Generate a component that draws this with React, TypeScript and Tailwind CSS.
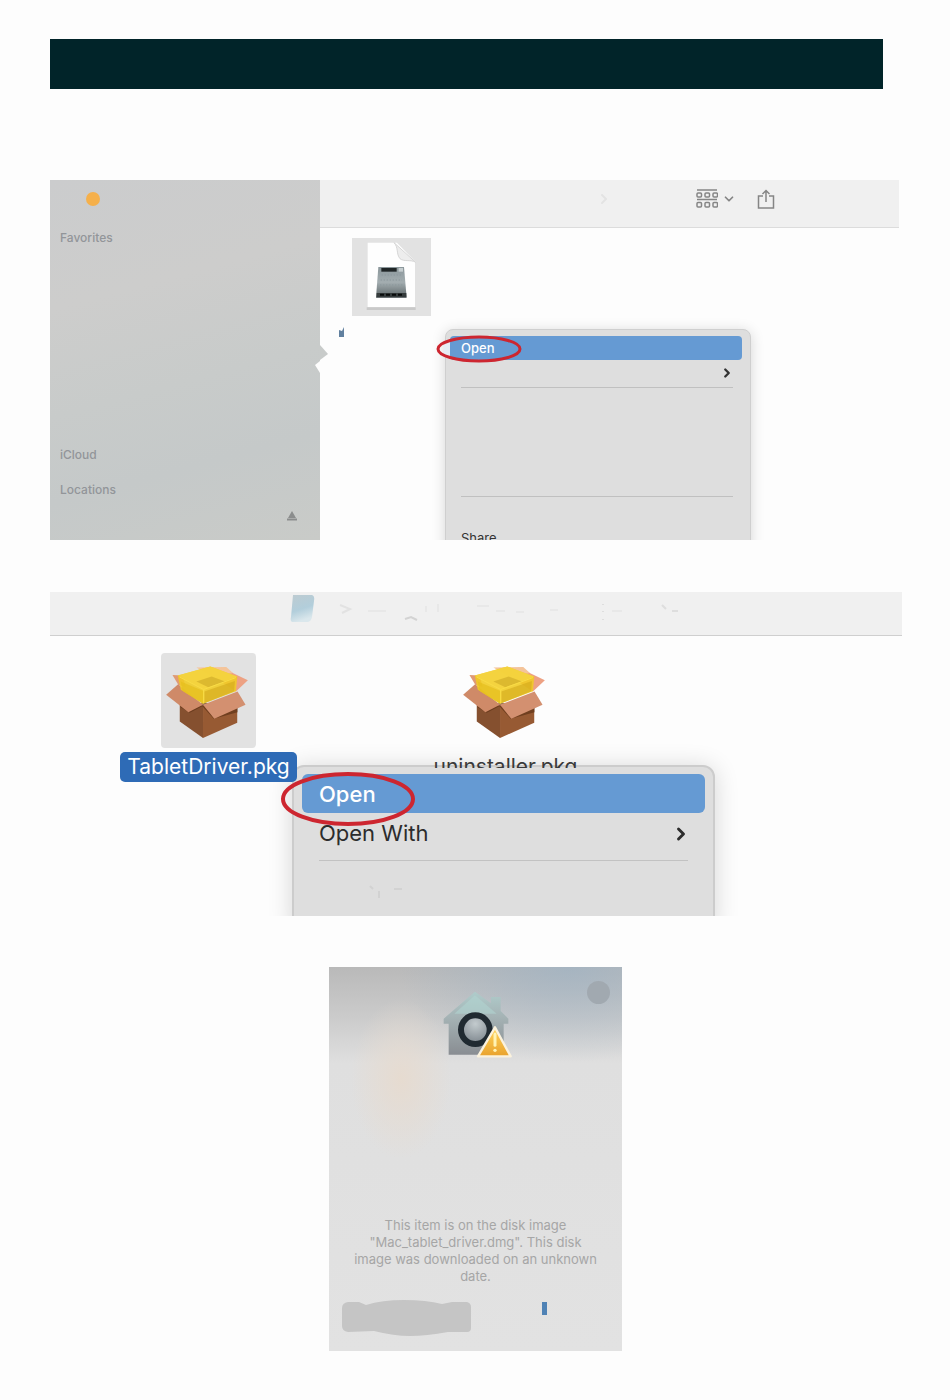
import React from "react";
import { ChevronDown, ChevronRight } from "lucide-react";

function DiskImageIcon() {
  return (
    <svg viewBox="96 204 237 234" className="block h-[78px] w-[79px]" aria-hidden="true">
      <defs>
        <linearGradient id="disk" x1="0" y1="0" x2="0" y2="1">
          <stop offset="0" stopColor="#8b979b" />
          <stop offset="0.5" stopColor="#a3adb0" />
          <stop offset="1" stopColor="#5b6466" />
        </linearGradient>
      </defs>
      <path d="M140 412h147v8H140z" fill="#c9c9c9" />
      <path d="M143 218h88l54 56v137H143z" fill="#fefefe" />
      <path d="M222 218c14 14 6 34 18 48 12 10 30 2 46 10z" fill="#ededed" stroke="#d6d6d6" strokeWidth="3" />
      <path d="M175 291h77l8 92h-92z" fill="url(#disk)" />
      <path d="M184 294h46v11h-46z" fill="#202627" />
      <path d="M236 294h13v11h-13z" fill="#c5cdcf" />
      <path d="M170 369h89v13h-89z" fill="#353b3c" />
      <path d="M180 374h70" stroke="#080b0b" strokeWidth="6" strokeDasharray="12 6" />
      <path d="M185 315h58M182 330h64M180 345h68" stroke="#8b979b" strokeWidth="3" strokeDasharray="4 5" />
    </svg>
  );
}

function PackageIcon() {
  return (
    <svg viewBox="364 202 285 286" className="block size-[95px]" aria-hidden="true">
      <path d="M420 350l70 10v98l-70-50z" fill="#85502f" />
      <path d="M490 360l103-30v82l-103 46z" fill="#975a33" />
      <path d="M420 364l30 18 38-20 34 38 72-20v-20l-100-8z" fill="#5f3317" opacity="0.7" />
      <path d="M398 268l30 2 10 34-22-6z" fill="#e09a74" />
      <path d="M545 246l80 38-36 34-60-40z" fill="#eda183" />
      <path d="M470 246l90-2 20 18-60 12z" fill="#f4c49a" />
      <path d="M415 296l-36 32 67 52 44-22z" fill="#cf8a68" />
      <path d="M490 358l104-40 24 40-94 42z" fill="#d39070" />
      <path d="M414 270l98-27 81 30-4 44-99 38-67-42z" fill="#f0cb22" opacity="0.88" />
      <path d="M414 270l98-27 81 30-101 38z" fill="#f5d440" opacity="0.85" />
      <path d="M423 288l67 28v39l-62-39z" fill="#e6bf1c" opacity="0.7" />
      <path d="M494 318l92-32-2 31-90 36z" fill="#d2a81a" opacity="0.6" />
      <path d="M470 288l46-15 40 15-50 17z" fill="#d2ae2a" opacity="0.7" />
      <path d="M419 274l73 38 97-36M492 312v42" fill="none" stroke="#f9dc45" strokeWidth="3" />
    </svg>
  );
}

function GatekeeperIcon() {
  return (
    <svg viewBox="370 90 210 210" className="block size-[70px]" aria-hidden="true">
      <defs>
        <linearGradient id="house" x1="0" y1="0" x2="0" y2="1">
          <stop offset="0" stopColor="#afcccb" />
          <stop offset="0.4" stopColor="#a5b3b5" />
          <stop offset="1" stopColor="#898d92" />
        </linearGradient>
        <radialGradient id="lens" cx="0.5" cy="0.3" r="0.7">
          <stop offset="0" stopColor="#c3cbce" />
          <stop offset="1" stopColor="#7d868d" />
        </radialGradient>
        <linearGradient id="alert" x1="0" y1="0" x2="0" y2="1">
          <stop offset="0" stopColor="#ffd55c" />
          <stop offset="1" stopColor="#e9a22d" />
        </linearGradient>
      </defs>
      <path d="M466 95l48 35v-19h29v42l23 23v15h-14v93H387v-93h-15v-15z" fill="url(#house)" />
      <path d="M466 106l65 55H404z" fill="#b1d4d1" opacity="0.6" />
      <circle cx="467" cy="209" r="43" fill="url(#lens)" stroke="#202a31" strokeWidth="18" />
      <path d="M526 202l47 87h-98z" fill="url(#alert)" stroke="#fbf2dd" strokeWidth="7" strokeLinejoin="round" />
      <path d="M526 222v34" stroke="#fff3b4" strokeWidth="9" strokeLinecap="round" />
      <circle cx="526" cy="271" r="5" fill="#fff3b4" />
    </svg>
  );
}

function GridIcon() {
  const columns = [0, 8, 16];
  return (
    <svg viewBox="0 0 22 20" className="h-5 w-[22px]" fill="none" stroke="#858585" strokeWidth="1.5" aria-hidden="true">
      <path d="M1 1h20M1 10.5h20" />
      {columns.map((x) => (
        <g key={x}>
          <rect x={x + 1} y="4" width="4.5" height="4" rx="1" />
          <rect x={x + 1} y="13.5" width="4.5" height="4.5" rx="1" />
        </g>
      ))}
    </svg>
  );
}

function ShareIcon() {
  return (
    <svg viewBox="0 0 18 21" className="h-[21px] w-[18px]" fill="none" stroke="#858585" strokeWidth="1.5" aria-hidden="true">
      <path d="M6 7H1.5v12h15V7H12M9 13V1.5M5.5 5L9 1.5 12.5 5" />
    </svg>
  );
}

function Finder() {
  return (
    <section className="relative mr-[3px] flex h-[360px] overflow-hidden">
      <aside className="flex w-[270px] shrink-0 flex-col bg-[linear-gradient(165deg,#cbcccd_0%,#cdcdcc_30%,#c8cbca_55%,#c5c9c9_75%,#c9cbc8_100%)] px-[10px] pt-3 text-[12px] leading-4 font-medium text-[#929599]">
        <span className="ml-[26px] size-[14px] rounded-full bg-[#f5b04b]" />
        <h2 className="mt-6">Favorites</h2>
        <h2 className="mt-[201px]">iCloud</h2>
        <h2 className="mt-[19px]">Locations</h2>
        <button aria-label="Eject" className="mt-[13px] mr-3 self-end">
          <svg viewBox="0 0 12 11" className="h-[11px] w-3" fill="#8b8d8d" aria-hidden="true">
            <path d="M6 0l4 7H2zM1 7.500h10v2H1z" />
          </svg>
        </button>
      </aside>
      <div className="min-w-0 flex-1">
        <div className="flex h-12 justify-end border-b border-[#dcdcdc] bg-[#f0f0f0] pr-[124px]">
          <div className="flex h-[38px] items-center">
            <ChevronRight className="mr-[84px] size-4 text-[#e3e3e3]" strokeWidth={3} aria-hidden="true" />
            <button aria-label="View" className="flex items-center gap-1">
              <GridIcon />
              <ChevronDown className="size-[14px] text-[#858585]" strokeWidth={3} />
            </button>
            <button aria-label="Share" className="ml-[21px]">
              <ShareIcon />
            </button>
          </div>
        </div>
        <div className="px-8 pt-[10px]">
          <div className="w-[79px] bg-[#e2e2e2]">
            <DiskImageIcon />
          </div>
        </div>
      </div>

      <svg viewBox="0 0 14 34" className="absolute top-[162px] left-[265px] h-[34px] w-[14px]" aria-hidden="true">
        <path d="M5 3l8 9-8 6z" fill="#c8cbca" />
        <path d="M5 19l-5 4 5 8z" fill="#fdfdfd" />
      </svg>
      <svg viewBox="0 0 6 10" className="absolute top-[147px] left-[289px] h-[10px] w-[6px]" aria-hidden="true">
        <path d="M0 3l3 1 2-4v10H0z" fill="#61809f" />
      </svg>

      <div className="absolute top-[149px] left-[395px] h-[230px] w-[306px] rounded-lg border border-[#cfcfcf] bg-[#dedede] px-1 pt-[6px] text-[13px] leading-6 text-[#333] shadow-[0_2px_14px_rgba(0,0,0,0.16)]">
        <button className="block h-6 w-[292px] rounded bg-[#659ad3] px-[11px] text-left font-medium text-white">Open</button>
        <div className="flex h-[27px] items-center justify-end pr-3 pb-[2px]">
          <ChevronRight className="size-[14px]" strokeWidth={4} aria-hidden="true" />
        </div>
        <hr className="mr-[13px] ml-[11px] border-[#c0c0c0]" />
        <hr className="mt-[108px] mr-[13px] ml-[11px] border-[#c0c0c0]" />
        <button className="mt-[29px] ml-[11px] block">Share</button>
      </div>
      <svg viewBox="0 0 86 28" className="absolute top-[155px] left-[386px] h-7 w-[86px]" aria-hidden="true">
        <path d="M8 8l6-2v16l-6-3z" fill="#e6edf4" />
        <ellipse cx="43" cy="14" rx="41" ry="12" fill="none" stroke="#cd2630" strokeWidth="3" />
      </svg>
    </section>
  );
}

function InstallerWindow() {
  return (
    <section className="relative mt-[52px] h-[324px] overflow-hidden">
      <div className="h-11 border-b border-[#cfcfcf] bg-[#f0f0f0] pl-60">
        <svg viewBox="0 0 400 34" className="h-[34px] w-[400px]" fill="none" aria-hidden="true">
          <defs>
            <linearGradient id="volume" x1="0" y1="0" x2="0.3" y2="1">
              <stop offset="0" stopColor="#bdcbd1" />
              <stop offset="0.6" stopColor="#b2cedb" />
              <stop offset="1" stopColor="#dae7ec" />
            </linearGradient>
          </defs>
          <path d="M3 3h19q3 1 2 6l-2 16q-1 5-5 5H2q-2-1-1-5z" fill="url(#volume)" />
          <path d="M50 13l10 4-8 4" stroke="#e2e2e2" strokeWidth="2" />
          <path d="M78 19h18M136 20v-6M148 20v-8M187 14h12M206 19h9M226 20h8M260 18h8M322 19h10" stroke="#e8e8e8" strokeWidth="2" />
          <path d="M115 27l6-2 6 3" stroke="#d3d3d3" strokeWidth="2" />
          <path d="M313 12v1M313 19v1M313 27v1M372 13l4 4M382 19h6" stroke="#dedede" strokeWidth="2" />
        </svg>
      </div>
      <div className="flex gap-[122px] pt-[17px] pl-[71px] text-[21px] leading-[30px]">
        <div className="flex w-[175px] flex-col items-center gap-1">
          <div className="rounded bg-[#e2e2e2]">
            <PackageIcon />
          </div>
          <div className="relative z-20 rounded-[5px] bg-[#2e6bb6] px-[7px] whitespace-nowrap text-white">TabletDriver.pkg</div>
        </div>
        <div className="relative z-10 flex w-[175px] flex-col items-center gap-1">
          <PackageIcon />
          <div className="h-4 overflow-hidden whitespace-nowrap text-[#3a3a3a]">uninstaller.pkg</div>
        </div>
      </div>

      <div className="absolute top-[173px] left-[242px] h-[170px] w-[423px] rounded-xl border-2 border-[#cccccc] bg-[#dedede] px-2 pt-[7px] text-[22px] text-[#2c2c2c] shadow-[0_2px_24px_rgba(0,0,0,0.16)]">
        <button className="block h-[39px] w-full rounded-md bg-[#659ad3] px-[17px] pt-[2px] text-left font-medium text-white">Open</button>
        <button className="flex h-[39px] w-full items-center justify-between pt-[2px] pr-[14px] pl-[17px] text-left">
          Open With
          <ChevronRight className="size-5" strokeWidth={3.5} aria-hidden="true" />
        </button>
        <hr className="mx-[17px] mt-2 border-[#c2c2c2]" />
        <svg viewBox="0 0 60 26" className="mt-4 ml-12 h-[26px] w-[60px]" fill="none" stroke="#d2d2d2" strokeWidth="2" aria-hidden="true">
          <path d="M20 9l3 3M29 14v7M44 12h8" />
        </svg>
      </div>
      <svg viewBox="0 0 136 56" className="absolute top-[179px] left-[230px] z-20 h-14 w-[136px]" aria-hidden="true">
        <ellipse cx="68" cy="28" rx="65" ry="25" fill="none" stroke="#cd2630" strokeWidth="4" />
      </svg>
    </section>
  );
}

function GatekeeperDialog() {
  return (
    <section className="relative mt-[51px] ml-[279px] flex h-[384px] w-[293px] flex-col items-center bg-[radial-gradient(ellipse_50px_80px_at_72px_112px,#e6dbd0_0%,#e6dbd000_100%),radial-gradient(ellipse_170px_95px_at_240px_0px,#9db2c4b0_0%,#9db2c400_100%),linear-gradient(180deg,#b9b9b9_0%,#cbcbcb_13%,#dfdfdf_25%,#e2e2e2_100%)] pt-[23px]">
      <button aria-label="Help" className="absolute top-[14px] right-3 size-[23px] rounded-full bg-[#a1a9b0]" />
      <div className="pl-1">
        <GatekeeperIcon />
      </div>
      <p className="mt-[157px] w-[250px] text-center text-[13px] leading-[17px] text-[#a6a6a6]">
        This item is on the disk image "Mac_tablet_driver.dmg". This disk image was downloaded on an unknown date.
      </p>
      <div className="mt-[14px] flex w-full justify-between pr-[75px] pl-[13px]">
        <svg viewBox="0 0 129 38" className="h-[38px] w-[129px]" aria-hidden="true">
          <path d="M6 3h11l7 3Q40 1 62 1t38 4l10-2h15q4 1 4 5v21q0 4-4 4h-19Q84 37 68 37T32 32L6 33q-6-1-6-6V9q0-5 6-6z" fill="#c5c5c5" />
        </svg>
        <span className="mt-[3px] h-[13px] w-[5px] bg-[#4f82b5]" />
      </div>
    </section>
  );
}

export default function App() {
  return (
    <main className="min-h-screen bg-[#fdfdfd] pt-[39px] pr-12 pb-[49px] pl-[50px] font-['Inter',sans-serif]">
      <header className="mr-[19px] mb-[91px] h-[50px] bg-[#012429]" />
      <Finder />
      <InstallerWindow />
      <GatekeeperDialog />
    </main>
  );
}
